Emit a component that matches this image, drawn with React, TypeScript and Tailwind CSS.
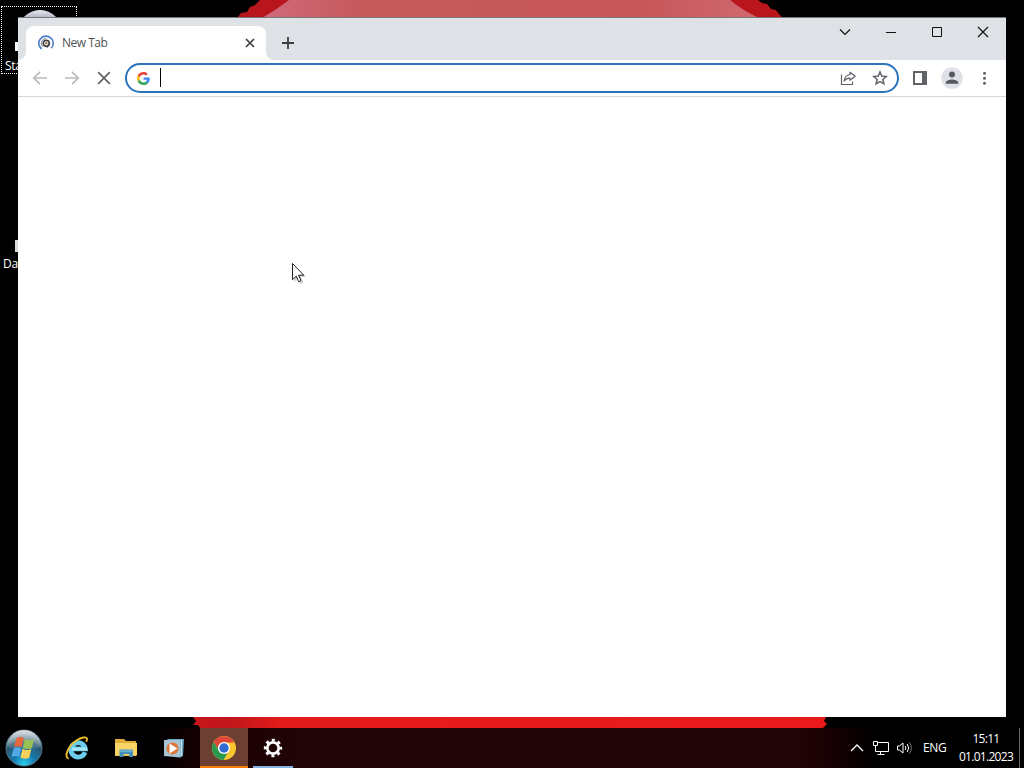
import type { ReactNode } from 'react';

function Wallpaper() {
  return (
    <svg className="absolute inset-0" width="1024" height="768" viewBox="0 0 1024 768">
      <defs>
        <linearGradient id="dome" x1="0" x2="1" y1="0" y2="0">
          <stop offset="0" stopColor="#d0697a" />
          <stop offset="0.2" stopColor="#c55a5c" />
          <stop offset="0.75" stopColor="#c65659" />
          <stop offset="1" stopColor="#d0696f" />
        </linearGradient>
        <linearGradient id="base" x1="0" x2="1" y1="0" y2="0">
          <stop offset="0" stopColor="#c8151b" />
          <stop offset="0.06" stopColor="#c0161b" />
          <stop offset="0.14" stopColor="#e41b1b" />
          <stop offset="1" stopColor="#ea1a1b" />
        </linearGradient>
      </defs>
      <path d="M237 18l4-5 6-1 3-5 5-2 5-5h498l4 3 5 1 4 5 5 1 3 4 4 4z" fill="#b8151c" />
      <path d="M262 18Q276 10 289 0h441q12 10 29 18z" fill="url(#dome)" />
      <path d="M193 717h633l-2 4 3 3-4 4H200l-2-3h-5l3-4z" fill="url(#base)" />
    </svg>
  );
}

function DesktopIcon({ label, className, children }: { label: string; className: string; children?: ReactNode }) {
  return (
    <div className={`absolute w-[76px] h-[68px] text-white ${className}`}>
      {children}
      <span className="absolute top-[51px] text-[12px] leading-[16px] tracking-[-0.3px] whitespace-nowrap">{label}</span>
    </div>
  );
}

function TabFavicon() {
  return (
    <svg width="16" height="16" viewBox="0 0 16 16" fill="none">
      <path d="M3.6 14A7.2 7.2 0 1 1 13.2 13.3" stroke="#4a7fcb" strokeWidth="1.6" />
      <path d="M4.4 11.6A5 5 0 0 1 8 3.4" stroke="#7d8798" strokeWidth="1" />
      <circle cx="8.3" cy="8.3" r="3" stroke="#42444b" strokeWidth="1.7" />
      <circle cx="8.3" cy="8.3" r="1.2" fill="#b07a45" />
      <path d="M9 12.5l2.8-4.5" stroke="#42444b" strokeWidth="1.3" />
    </svg>
  );
}

function GoogleLogo() {
  return (
    <svg width="13" height="13" viewBox="0 0 48 48">
      <path fill="#EA4335" d="M24 9.5c3.54 0 6.71 1.22 9.21 3.6l6.85-6.85C35.9 2.38 30.47 0 24 0 14.62 0 6.51 5.38 2.56 13.22l7.98 6.19C12.43 13.72 17.74 9.5 24 9.5z" />
      <path fill="#4285F4" d="M46.98 24.55c0-1.57-.15-3.09-.38-4.55H24v9.02h12.94c-.58 2.96-2.26 5.48-4.78 7.18l7.73 6c4.51-4.18 7.09-10.36 7.09-17.65z" />
      <path fill="#FBBC05" d="M10.53 28.59A14.5 14.5 0 0 1 9.77 24c0-1.6.28-3.14.76-4.59l-7.98-6.19A23.9 23.9 0 0 0 0 24c0 3.88.92 7.54 2.56 10.78z" />
      <path fill="#34A853" d="M24 48c6.48 0 11.93-2.13 15.89-5.81l-7.73-6c-2.15 1.45-4.92 2.3-8.16 2.3-6.26 0-11.57-4.22-13.47-9.91l-7.98 6.19C6.51 42.62 14.62 48 24 48z" />
    </svg>
  );
}

function WindowButton({ children }: { children: ReactNode }) {
  return (
    <button className="flex h-7 w-[46px] items-center justify-center">
      <svg width="12" height="12" viewBox="0 0 12 12" fill="none" stroke="#111">{children}</svg>
    </button>
  );
}

function ToolButton({ children }: { children: ReactNode }) {
  return (
    <button className="flex size-8 shrink-0 items-center justify-center">
      <svg width="16" height="16" viewBox="0 0 16 16" fill="none">{children}</svg>
    </button>
  );
}

function TabStrip() {
  return (
    <div className="flex h-[42px] bg-[#dee1e6]">
      <div className="relative ml-2 mt-2 flex h-[34px] w-[240px] items-center rounded-t-lg bg-white pl-3 pr-[11px]">
        <svg className="absolute -left-2 bottom-0" width="8" height="8"><path d="M8 0v8H0a8 8 0 0 0 8-8" fill="#fff" /></svg>
        <svg className="absolute -right-2 bottom-0" width="8" height="8"><path d="M0 0v8h8a8 8 0 0 1-8-8" fill="#fff" /></svg>
        <TabFavicon />
        <span className="ml-2 flex-1 text-[12px] leading-4 tracking-[-0.5px] text-[#505458]">New Tab</span>
        <svg width="10" height="10" viewBox="0 0 10 10" stroke="#3c4043" strokeWidth="1.7">
          <path d="M1 1l8 8M9 1L1 9" />
        </svg>
      </div>
      <button className="ml-2 mt-[11px] flex size-7 items-center justify-center">
        <svg width="12" height="12" viewBox="0 0 12 12" stroke="#3c4043" strokeWidth="1.8"><path d="M6 0v12M0 6h12" /></svg>
      </button>
      <div className="ml-auto flex">
        <WindowButton><path d="M1 3.5l5 5 5-5" strokeWidth="1.2" /></WindowButton>
        <WindowButton><path d="M1 6.5h10" /></WindowButton>
        <WindowButton><path d="M1.5 1.5h9v9h-9z" /></WindowButton>
        <WindowButton><path d="M1 1l10 10M11 1L1 11" strokeWidth="1.2" /></WindowButton>
      </div>
    </div>
  );
}

function Toolbar() {
  return (
    <div className="flex h-[37px] items-center border-b border-[#d5d7da] bg-white px-1.5">
      <ToolButton><path d="M15 8H2M8 1.8L1.8 8 8 14.2" stroke="#b9bbbd" strokeWidth="1.7" /></ToolButton>
      <ToolButton><path d="M1 8h13M8 1.8L14.2 8 8 14.2" stroke="#b9bbbd" strokeWidth="1.7" /></ToolButton>
      <ToolButton><path d="M2.2 2.2l11.6 11.6M13.8 2.2L2.2 13.8" stroke="#5f6368" strokeWidth="1.7" /></ToolButton>
      <div className="mx-[5px] flex h-[30px] flex-1 items-center rounded-full border-2 border-[#2c73bd] pl-2.5 pr-px">
        <GoogleLogo />
        <span className="mb-0.5 ml-2.5 h-[19px] w-px bg-black" />
        <span className="flex-1" />
        <ToolButton>
          <path d="M1.5 4.5v10h11v-3" stroke="#5f6368" strokeWidth="1.2" />
          <path d="M10 2.2L15.2 6.2 10 10.3V8.1C7.5 8 5.5 9 4.2 11c.3-3.3 2.3-6 5.800-6.500z" stroke="#5f6368" strokeWidth="1.2" strokeLinejoin="round" />
        </ToolButton>
        <ToolButton>
          <path d="M8 2l1.75 4.1 4.45.4-3.35 2.95 1 4.35L8 11.5l-3.85 2.3 1-4.35L1.8 6.5l4.45-.4z" stroke="#5f6368" strokeWidth="1.5" />
        </ToolButton>
      </div>
      <ToolButton>
        <path d="M1 1h14v14H1z" fill="#5f6368" />
        <path d="M3 3h7v10H3z" fill="#fff" />
      </ToolButton>
      <button className="flex size-8 items-center justify-center">
        <svg width="22" height="22" viewBox="0 0 22 22">
          <circle cx="11" cy="11" r="10.8" fill="#dee1e6" />
          <circle cx="11" cy="7.6" r="3" fill="#565b61" />
          <path d="M4.8 16.8v-1.3c0-2 4-3.1 6.2-3.1s6.2 1.1 6.2 3.1v1.3z" fill="#565b61" />
        </svg>
      </button>
      <ToolButton>
        <g fill="#5f6368"><circle cx="8.5" cy="3.2" r="1.5" /><circle cx="8.5" cy="8.3" r="1.5" /><circle cx="8.5" cy="13.2" r="1.5" /></g>
      </ToolButton>
    </div>
  );
}

function StartOrb() {
  return (
    <svg width="38" height="38" viewBox="0 0 38 38">
      <defs>
        <radialGradient id="orb" cx=".5" cy=".95" r=".9">
          <stop offset="0" stopColor="#2fd0f3" />
          <stop offset=".35" stopColor="#1678ab" />
          <stop offset=".7" stopColor="#28566f" />
          <stop offset="1" stopColor="#a5b2b9" />
        </radialGradient>
        <linearGradient id="orbShine" x2="0" y2="1">
          <stop offset="0" stopColor="#fff" stopOpacity=".55" />
          <stop offset="1" stopColor="#fff" stopOpacity=".08" />
        </linearGradient>
      </defs>
      <circle cx="19" cy="19" r="18" fill="url(#orb)" stroke="#5d7785" strokeWidth="1" />
      <path d="M2 18a17 17 0 0 1 34 0q-17 5-34 0" fill="url(#orbShine)" />
      <path d="M11.5 9.5q3.5-2.6 7.3-.6l-2.2 9.1q-3.8-1.6-7.6.2z" fill="#e8663a" />
      <path d="M20 9.9q4 2.2 9 .3l-2.3 9q-4.8 1.8-8.9-.3z" fill="#98c354" />
      <path d="M8.7 19.4q4-2 7.6-.2l-2.2 8.8q-3.6-1.9-7.7 0z" fill="#55a8e6" />
      <path d="M17.5 19.8q4.3 2.2 8.9.3l-2.2 8.6q-4.6 2-8.8-.1z" fill="#fbd257" />
    </svg>
  );
}

function ExplorerE() {
  return (
    <svg width="24" height="24" viewBox="0 0 24 24" fill="none">
      <path d="M20 16.2A7.2 7.2 0 1 1 20.3 12.8H8" stroke="#69cdeb" strokeWidth="4.8" />
      <path d="M7 13h15" stroke="#a6e5f5" strokeWidth="3" />
      <path d="M3.7 22.5C-1.5 21.5 3 10 11 4.7c5.5-3.6 10.6-4.4 11-1.6 0 1-.3 1.8-.8 2.6" stroke="#edbd25" strokeWidth="1.9" />
    </svg>
  );
}

function Folder() {
  return (
    <svg width="22" height="20" viewBox="0 0 22 20">
      <path d="M0 1h9l2 2h10v15H0z" fill="#e0ac3a" />
      <path d="M0 5h22v12.5H0z" fill="#f8d567" />
      <path d="M4.5 19v-6.500q0-1 1-1h11.500q1 0 1 1V19h-4v-3H8.500v3z" fill="#438fba" />
      <path d="M5 12h12.500v2H5z" fill="#65afd0" />
    </svg>
  );
}

function MediaPlayer() {
  return (
    <svg width="20" height="19" viewBox="0 0 20 19">
      <path d="M3 0h17l-1 17-3 1.5z" fill="#67a9c4" />
      <path d="M0 1h16.5v17.5L0 17z" fill="#a8c4d5" />
      <path d="M17.5 1v16" stroke="#c2e3ea" />
      <circle cx="8.5" cy="9.5" r="6" fill="#df7438" />
      <path d="M5.5 4.5l8 5-8 5z" fill="#fff" />
    </svg>
  );
}

function Chrome() {
  return (
    <svg width="24" height="24" viewBox="0 0 24 24">
      <circle cx="12" cy="12" r="12" fill="#fbc72e" />
      <path d="M1.6 6A12 12 0 0 1 22.4 6.5H12L7.2 14.7z" fill="#df4638" />
      <path d="M1.6 6A12 12 0 0 0 11.5 24l5.3-9.3L12 17.5l-4.8-2.8z" fill="#279a50" />
      <circle cx="12" cy="12" r="6.1" fill="#fff" />
      <circle cx="12" cy="12" r="4.7" fill="#316bd1" />
    </svg>
  );
}

function Gear() {
  return (
    <svg width="20" height="20" viewBox="0 0 20 20" fill="none" stroke="#fff">
      <circle cx="10" cy="10" r="5.7" strokeWidth="2.7" />
      <circle cx="10" cy="10" r="7.9" strokeWidth="2.6" strokeDasharray="3 3.205" strokeDashoffset="1.5" />
    </svg>
  );
}

function Taskbar() {
  return (
    <div className="absolute bottom-0 flex h-10 w-full items-center bg-[linear-gradient(90deg,#000_0,#000_155px,#180004_202px,#210405_300px,#210405_800px,#180003_830px,#000_875px)] text-[12px] text-white">
      <button className="flex h-10 w-[53px] items-center pl-[5px]"><StartOrb /></button>
      <button className="flex h-10 w-12 items-center justify-center"><ExplorerE /></button>
      <button className="flex h-10 w-[49px] items-center justify-center"><Folder /></button>
      <button className="flex h-10 w-[50px] items-center pl-3.5 pt-px"><MediaPlayer /></button>
      <button className="flex h-10 w-12 items-center justify-center border-b-2 border-[#f77b0b] bg-[#6b4033] pt-0.5"><Chrome /></button>
      <button className="ml-[5px] flex h-10 w-10 items-center justify-center border-b-2 border-[#83b4e3] pt-0.5"><Gear /></button>
      <div className="ml-auto flex h-full items-center">
        <svg className="mr-2" width="14" height="12" viewBox="0 0 14 12" fill="none" stroke="#fff" strokeWidth="1.3"><path d="M1 9l6-6 6 6" /></svg>
        <svg width="18" height="16" viewBox="0 0 18 16" fill="none" stroke="#fff">
          <path d="M5 2.5h11.500v9H3.500V7M8.500 11.500v3M5.500 14.500h7M1.500 1.500h4v4h-4zM3.500 5v3" />
        </svg>
        <svg className="ml-1.5" width="18" height="16" viewBox="0 0 18 16" fill="none" stroke="#fff">
          <path d="M1.5 6h2l3.5-3v10l-3.5-3h-2z" />
          <path d="M9.2 6q1.5 2 0 4M11.2 4q3 4 0 8" />
          <path d="M13.3 2.5q4 5.5 0 11" stroke="#777" />
        </svg>
        <span className="ml-[9px] w-6 whitespace-nowrap tracking-[-0.4px]">ENG</span>
        <div className="ml-[11px] w-[56px] text-center leading-[18px] whitespace-nowrap tracking-[-0.7px]">
          <div>15:11</div>
          <div>01.01.2023</div>
        </div>
        <div className="ml-[5px] mr-1 h-10 w-px bg-[#666]" />
      </div>
    </div>
  );
}

export default function App() {
  return (
    <div className="relative h-[768px] w-[1024px] overflow-hidden bg-black font-['Open_Sans',sans-serif]">
      <Wallpaper />
      <DesktopIcon label="Start" className="left-px top-[6px] border border-dotted border-white pl-[3px]">
        <svg className="absolute left-3 top-0" width="48" height="44" viewBox="-2 0 48 44">
          <defs>
            <linearGradient id="globe" x2="0" y2="1">
              <stop offset="0" stopColor="#eceef5" />
              <stop offset=".3" stopColor="#858a9e" />
              <stop offset="1" stopColor="#33394d" />
            </linearGradient>
          </defs>
          <circle cx="24" cy="25" r="22" fill="url(#globe)" />
          <path d="M-1 35h7v12h-7z" fill="#fff" />
        </svg>
      </DesktopIcon>
      <DesktopIcon label="Data" className="left-[3px] top-[205px]">
        <span className="absolute left-[12px] top-[35px] h-3 w-4 bg-[#ddd]" />
      </DesktopIcon>
      <main className="absolute left-[18px] top-[17px] flex h-[700px] w-[988px] flex-col border-t border-[#777] bg-white">
        <TabStrip />
        <Toolbar />
        <div className="flex-1 bg-white" />
      </main>
      <Taskbar />
      <svg className="absolute left-[291px] top-[262px]" width="18" height="24" viewBox="0 0 18 24">
        <path d="M3 3v17l4-4 2.5 6 3-1.2-2.5-5.8h5z" fill="#000" opacity=".18" />
        <path d="M1.5 1.5v16.2l3.7-3.6 2.5 5.6 2.3-1-2.5-5.5h5.3z" fill="#fff" stroke="#222" />
      </svg>
    </div>
  );
}
